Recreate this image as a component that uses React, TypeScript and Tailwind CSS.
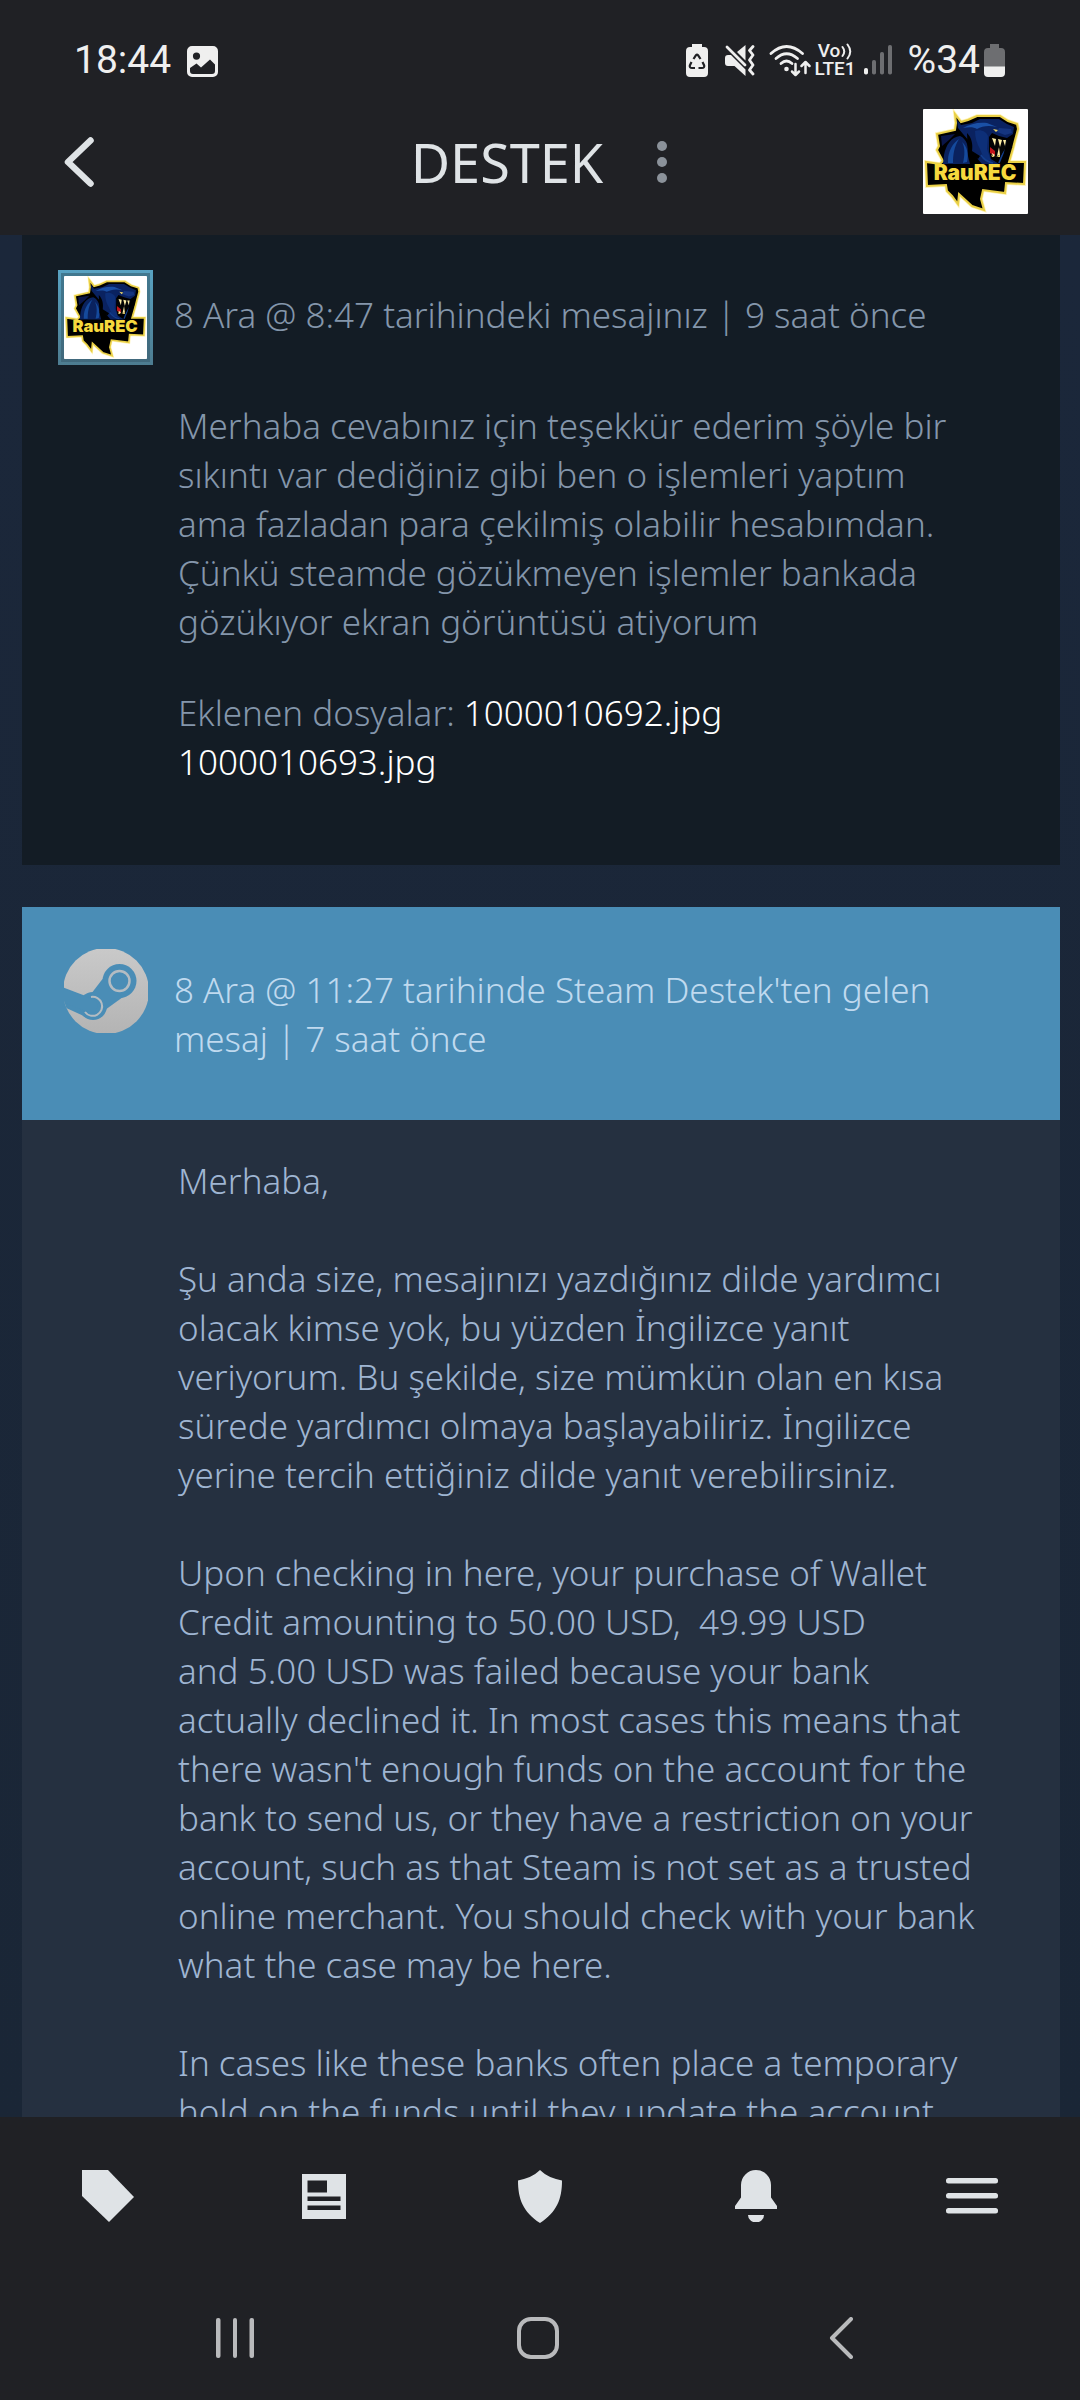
import React from "react";

function Avatar({ className }: { className: string }) {
  return (
    <svg viewBox="0 0 105 105" className={className} role="img" aria-label="RauREC">
      <rect width="105" height="105" rx="1" fill="#fff" />
      <path
        d="M32 5 38 13 45 11 54 7H77L85 12 94 15 95 20 92 31 90 39 86 53 102 53 101 75 83 74 82 84 60 81 58 90 61 101 49 97 36 85 35 95 29 87 24 82 23 76 4 77 3 53 17 55 20 52 14 41 16 37 14 25 32 21 33 14Z"
        fill="#000"
        stroke="#fff3b0"
        strokeWidth="3.6"
        strokeLinejoin="miter"
      />
      <path
        d="M32 5 38 13 45 11 54 7H77L85 12 94 15 95 20 92 31 90 39 86 53 102 53 101 75 83 74 82 84 60 81 58 90 61 101 49 97 36 85 35 95 29 87 24 82 23 76 4 77 3 53 17 55 20 52 14 41 16 37 14 25 32 21 33 14Z"
        fill="#000"
        stroke="#e9cf45"
        strokeWidth="2"
      />
      <path d="M18 27 32 25 26 31 19 37Z" fill="#0b1648" />
      <path d="M21 46C23 36 28 28 37 27 44 30 46 38 45 47L47 55H20Z" fill="#0a225e" />
      <path d="M25 52C25 42 30 34 36 30 31 38 30 46 30 54H25ZM39 33C42 38 42 46 40 54L44 53C46 45 44 37 39 33Z" fill="#154a9c" />
      <path d="M34 11 38 16 49 14 57 10H76L84 15 91 18 90 25 84 29 76 27 69 24 66 28 66 42 68 50 76 55H59L52 47 47 45 46 32 40 25 35 19Z" fill="#0a2260" />
      <path d="M40 19C47 15 55 13 64 14L74 18C66 16 59 17 54 20 51 18 46 18 40 19Z" fill="#1a50a6" />
      <path d="M76 19 88 20 89 24 82 26 74 23Z" fill="#15357f" />
      <path d="M52 22C57 20 63 22 65 27L64 40 68 52 61 50 57 40C54 35 52 29 52 22Z" fill="#0d2f78" />
      <path d="M44 24C49 29 50 36 49 42L57 47 55 50 48 46 45 47Z" fill="#000" />
      <path d="M58 46C61 51 65 53 70 54M83 31 80 44 76 54" fill="none" stroke="#133e8c" strokeWidth="1.6" />
      <path d="M68 28 84 31 82 40 77 48 70 48 66 42Z" fill="#050505" />
      <path d="M67 38 72 42 72 47 67 44Z" fill="#c3151b" />
      <path d="M69 29 73 30 72 37ZM75 30 79 31 77 38ZM80 31 83 31 82 37ZM76 38 77 46 74 47ZM69 44 72 46 70 48Z" fill="#fff0a8" />
      <path d="M68 45C70 49 75 49 77 45L77 48H69Z" fill="#ecd668" />
      <path d="M70 20 75 21 73 23Z" fill="#ecd668" />
      <text x="52" y="71" textAnchor="middle" fill="#f6d83d" fontFamily="Inter, 'Liberation Sans', sans-serif" fontWeight="900" fontSize="21">
        RauREC
      </text>
    </svg>
  );
}

function SteamLogo() {
  return (
    <svg viewBox="0 0 84 84" className="size-[84px]" role="img" aria-label="Steam">
      <defs>
        <linearGradient id="disc" x1="0" y1="0" x2="0" y2="1">
          <stop offset="0" stopColor="#c9c9c9" />
          <stop offset="1" stopColor="#b4b4b4" />
        </linearGradient>
        <clipPath id="round">
          <circle cx="42" cy="42" r="43" />
        </clipPath>
      </defs>
      <g clipPath="url(#round)">
        <rect width="84" height="84" fill="url(#disc)" />
        <g fill="#4a8db6">
          <circle cx="55.5" cy="32" r="17" />
          <circle cx="29" cy="57" r="14" />
          <path d="M38.5 30 27 45 41 61 59 48Z" />
          <path d="M-2 38 27 49 22 68 -2 57Z" />
        </g>
        <path d="M27 48A9.500 9.500 0 1 1 21 63" fill="none" stroke="#b4bcc2" strokeWidth="2" />
        <path d="M-2 39 30 51A7 7 0 0 1 27 64L-2 53Z" fill="#4a8db6" />
        <circle cx="55.500" cy="32" r="10" fill="none" stroke="#b4bcc2" strokeWidth="2.500" />
      </g>
    </svg>
  );
}

function StatusBar() {
  return (
    <div className="flex h-[88px] shrink-0 items-center justify-between pt-8 pr-[75px] pl-[74px] font-[Roboto,sans-serif] text-[#efefef]">
      <div className="flex items-center gap-4">
        <span className="text-[39px] leading-10">18:44</span>
        <svg viewBox="0 0 31 31" className="mt-0.5 size-[31px]" aria-hidden="true">
          <path
            fillRule="evenodd"
            fill="currentColor"
            d="M5 0H26A5 5 0 0 1 31 5V26A5 5 0 0 1 26 31H5A5 5 0 0 1 0 26V5A5 5 0 0 1 5 0ZM9.500 6.500A3.600 3.600 0 1 0 9.500 13.700 3.600 3.600 0 1 0 9.500 6.500ZM3 22V25Q3 28 6 28H25Q28 28 28 25V18.500L23 13.500 14 21.500 9.500 17.500Z"
          />
        </svg>
      </div>
      <div className="flex items-center">
        <svg viewBox="0 0 22 33" className="mr-[17px] h-[33px] w-[22px]" aria-hidden="true">
          <path d="M6 0H16V3H18A4 4 0 0 1 22 7V29A4 4 0 0 1 18 33H4A4 4 0 0 1 0 29V7A4 4 0 0 1 4 3H6Z" fill="currentColor" />
          <g fill="none" stroke="#202125" strokeWidth="2.200" strokeLinejoin="round">
            <path d="M7.500 15 10 11.200Q11 10 12 11.200L14.500 15" />
            <path d="M5.500 18 3.800 21.500Q3.400 24 6 24H9" />
            <path d="M16.500 18 18.200 21.500Q18.600 24 16 24H12.500" />
          </g>
        </svg>
        <svg viewBox="0 0 30 31" className="mr-[14px] h-[31px] w-[30px]" aria-hidden="true">
          <path d="M12 7 20.500 0V15.500ZM0 13A3 3 0 0 1 3 10H6L20.500 24.500V31L9.500 21H3A3 3 0 0 1 0 18Z" fill="currentColor" />
          <path d="M2 2 20 20" stroke="currentColor" strokeWidth="2.800" strokeLinecap="round" />
          <path d="M28 1.500 24.500 5.500 28 10 24.500 15 28 20 24.500 25 28 29" fill="none" stroke="currentColor" strokeWidth="2.800" strokeLinecap="round" strokeLinejoin="round" />
        </svg>
        <svg viewBox="0 0 42 33" className="mr-1 h-[33px] w-[42px]" aria-hidden="true">
          <g fill="none" stroke="currentColor" strokeWidth="2.800" strokeLinecap="round">
            <path d="M2 9.500Q17.500-4.500 33.500 9.500" />
            <path d="M7 14.500Q17.500 5 28.500 14.500" />
            <path d="M12 19.500Q17.500 14.500 23 19.500" />
          </g>
          <circle cx="17.500" cy="25" r="2.300" fill="currentColor" />
          <g fill="none" stroke="currentColor" strokeWidth="2.500" strokeLinecap="round" strokeLinejoin="round">
            <path d="M26.500 20V30.500M23 27.500 26.500 31 30 27.500" />
            <path d="M36.500 29V19M32.500 22 36.500 18 40.500 22" />
          </g>
        </svg>
        <div className="mr-2 flex flex-col text-[19px] leading-[18px] font-medium">
          <span className="flex items-center justify-center gap-px">
            Vo
            <svg viewBox="0 0 11 17" className="h-[17px] w-[11px]" fill="none" stroke="currentColor" strokeWidth="2" strokeLinecap="round" aria-hidden="true">
              <path d="M1.500 4Q5 8.500 1.500 13M6.500 1.500Q12 8.500 6.500 15.500" />
            </svg>
          </span>
          <span>LTE1</span>
        </div>
        <svg viewBox="0 0 28 30" className="mr-4 h-[30px] w-[28px]" aria-hidden="true">
          <rect x="0" y="23" width="4" height="6.500" rx="1.800" fill="currentColor" />
          <g fill="#6d6e71">
            <rect x="8" y="15" width="4" height="14.500" rx="1.800" />
            <rect x="16" y="7" width="4" height="22.500" rx="1.800" />
            <rect x="24" y="0" width="4" height="29.500" rx="1.800" />
          </g>
        </svg>
        <span className="mr-1 text-[39px] leading-10">%34</span>
        <svg viewBox="0 0 21 33" className="h-[33px] w-[21px]" aria-hidden="true">
          <path d="M6 0H15V4H17A4 4 0 0 1 21 8V23H0V8A4 4 0 0 1 4 4H6Z" fill="#6d6e71" />
          <path d="M0 22.500H21V29A4 4 0 0 1 17 33H4A4 4 0 0 1 0 29Z" fill="currentColor" />
        </svg>
      </div>
    </div>
  );
}

function AppBar() {
  return (
    <header className="grid h-[147px] shrink-0 grid-cols-[1fr_auto_1fr] items-center pr-[52px] pl-[60px]">
      <button type="button" aria-label="Geri" className="flex size-[60px] items-center pl-1">
        <svg viewBox="0 0 30 50" className="h-[50px] w-[30px]" aria-hidden="true">
          <path d="M26.500 3.500 4 25 26.500 46.500" fill="none" stroke="#dfe3e6" strokeWidth="6.500" strokeLinecap="round" strokeLinejoin="round" />
        </svg>
      </button>
      <div className="flex items-center gap-11">
        <h1 className="text-[54px] leading-[60px] text-[#dfe3e6]">DESTEK</h1>
        <button type="button" aria-label="Seçenekler" className="flex h-[60px] w-[30px] items-center justify-center">
          <svg viewBox="0 0 10 42" className="h-[42px] w-[10px]" fill="#8b929a" aria-hidden="true">
            <circle cx="5" cy="5" r="5" />
            <circle cx="5" cy="21" r="5" />
            <circle cx="5" cy="37" r="5" />
          </svg>
        </button>
      </div>
      <button type="button" aria-label="Profil" className="justify-self-end">
        <Avatar className="size-[105px]" />
      </button>
    </header>
  );
}

const replyParagraphs = [
  "Merhaba,",
  "Şu anda size, mesajınızı yazdığınız dilde yardımcı\nolacak kimse yok, bu yüzden İngilizce yanıt\nveriyorum. Bu şekilde, size mümkün olan en kısa\nsürede yardımcı olmaya başlayabiliriz. İngilizce\nyerine tercih ettiğiniz dilde yanıt verebilirsiniz.",
  "Upon checking in here, your purchase of Wallet\nCredit amounting to 50.00 USD,  49.99 USD\nand 5.00 USD was failed because your bank\nactually declined it. In most cases this means that\nthere wasn't enough funds on the account for the\nbank to send us, or they have a restriction on your\naccount, such as that Steam is not set as a trusted\nonline merchant. You should check with your bank\nwhat the case may be here.",
  "In cases like these banks often place a temporary\nhold on the funds until they update the account",
];

function Messages() {
  return (
    <main className="flex min-h-0 flex-1 flex-col gap-[42px] overflow-y-auto bg-linear-to-b from-[#1b273a] to-[#1a2636] pr-[20px] pl-[22px] text-[35px] leading-[49px] font-light [scrollbar-width:none]">
      <article className="shrink-0 bg-[#131c25] px-9 pt-[35px] pb-[79px] text-[#8496ab]">
        <header className="flex items-start gap-[21px]">
          <div className="shrink-0 bg-linear-to-b from-[#58a2c2] to-[#4d7c90] p-[3px]">
            <div className="bg-linear-to-b from-[#41788f] to-[#41697c] p-[3px]">
              <Avatar className="size-[83px]" />
            </div>
          </div>
          <p className="pt-5">8 Ara @ 8:47 tarihindeki mesajınız | 9 saat önce</p>
        </header>
        <div className="flex flex-col gap-[42px] pt-9 pl-[120px]">
          <p className="whitespace-pre-wrap">
            {"Merhaba cevabınız için teşekkür ederim şöyle bir\nsıkıntı var dediğiniz gibi ben o işlemleri yaptım\nama fazladan para çekilmiş olabilir hesabımdan.\nÇünkü steamde gözükmeyen işlemler bankada\ngözükıyor ekran görüntüsü atiyorum"}
          </p>
          <p>
            Eklenen dosyalar:{" "}
            <a href="#1000010692" className="text-white">1000010692.jpg</a>
            <br />
            <a href="#1000010693" className="text-white">1000010693.jpg</a>
          </p>
        </div>
      </article>

      <article className="shrink-0 bg-[#253040] text-[#9fb5d2]">
        <header className="flex items-start gap-[26px] bg-[#4a8db6] pt-[42px] pr-20 pb-[57px] pl-[42px] text-[#c0daef]">
          <div className="shrink-0">
            <SteamLogo />
          </div>
          <p className="pt-4">8 Ara @ 11:27 tarihinde Steam Destek'ten gelen mesaj | 7 saat önce</p>
        </header>
        <div className="flex flex-col gap-[49px] pt-9 pr-9 pl-[156px]">
          {replyParagraphs.map((text) => (
            <p key={text} className="whitespace-pre-wrap">{text}</p>
          ))}
        </div>
      </article>
    </main>
  );
}

function TabBar() {
  return (
    <nav className="grid h-[158px] shrink-0 grid-cols-5 place-items-center text-[#dfe3e6]">
      <button type="button" aria-label="Mağaza">
        <svg viewBox="0 0 52 52" className="size-[52px]" fill="currentColor" aria-hidden="true">
          <path d="M0 0H26L52 27 27 52 0 26Z" />
        </svg>
      </button>
      <button type="button" aria-label="Haberler">
        <svg viewBox="0 0 44 45" className="h-[45px] w-[44px]" aria-hidden="true">
          <path fill="currentColor" fillRule="evenodd" d="M0 0H44V45H0ZM5.500 6.500V18.500H25V6.500ZM5.500 22.500V27H38.500V22.500ZM5.500 31.500V36H38.500V31.500Z" />
        </svg>
      </button>
      <button type="button" aria-label="Steam Guard">
        <svg viewBox="0 0 44 53" className="h-[53px] w-[44px]" fill="currentColor" aria-hidden="true">
          <path d="M22 0C28 6 36 9 44 10.500C44 29 39 42 22 53C5 42 0 29 0 10.500C8 9 16 6 22 0Z" />
        </svg>
      </button>
      <button type="button" aria-label="Bildirimler">
        <svg viewBox="0 0 42 52" className="h-[52px] w-[42px]" fill="currentColor" aria-hidden="true">
          <path d="M6 15A15 15 0 0 1 36 15V27.500L42 36V39H0V36L6 27.500ZM13 45H29A8 7.500 0 0 1 13 45Z" />
        </svg>
      </button>
      <button type="button" aria-label="Menü">
        <svg viewBox="0 0 52 36" className="h-[36px] w-[52px]" fill="currentColor" aria-hidden="true">
          <rect y="0" width="52" height="5.500" rx="2.500" />
          <rect y="15" width="52" height="5.500" rx="2.500" />
          <rect y="30" width="52" height="5.500" rx="2.500" />
        </svg>
      </button>
    </nav>
  );
}

function SystemBar() {
  return (
    <div className="grid h-[125px] shrink-0 grid-cols-3 place-items-center pr-[88px] pl-[84px] text-[#b9babc]">
      <button type="button" aria-label="Son uygulamalar">
        <svg viewBox="0 0 38 40" className="h-[40px] w-[38px]" fill="currentColor" aria-hidden="true">
          <rect x="0" width="4.500" height="40" rx="2" />
          <rect x="17" width="4" height="40" rx="2" />
          <rect x="33.500" width="4.500" height="40" rx="2" />
        </svg>
      </button>
      <button type="button" aria-label="Ana ekran">
        <svg viewBox="0 0 42 42" className="size-[42px]" aria-hidden="true">
          <rect x="2" y="2" width="38" height="38" rx="12" fill="none" stroke="currentColor" strokeWidth="4" />
        </svg>
      </button>
      <button type="button" aria-label="Geri">
        <svg viewBox="0 0 24 42" className="h-[42px] w-[24px]" aria-hidden="true">
          <path d="M22 2 3 21 22 40" fill="none" stroke="currentColor" strokeWidth="4" strokeLinecap="round" strokeLinejoin="round" />
        </svg>
      </button>
    </div>
  );
}

export default function App() {
  return (
    <div className="flex h-screen flex-col bg-[#202125] font-['Noto_Sans','Open_Sans',sans-serif]">
      <StatusBar />
      <AppBar />
      <Messages />
      <TabBar />
      <SystemBar />
    </div>
  );
}
